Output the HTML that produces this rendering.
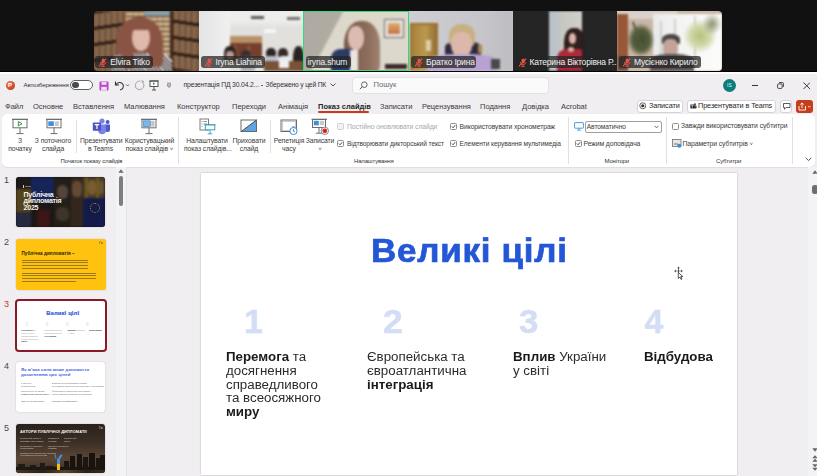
<!DOCTYPE html>
<html><head><meta charset="utf-8">
<style>
*{margin:0;padding:0;box-sizing:border-box}
html,body{width:817px;height:476px;overflow:hidden;background:#101010;font-family:"Liberation Sans",sans-serif}
.a{position:absolute}
.t{position:absolute;white-space:nowrap;line-height:1}
#zoom{left:0;top:0;width:817px;height:72px;background:#111}
.tile{position:absolute;top:11px;height:60px;overflow:hidden}
.bl{position:absolute;left:0;top:0;width:100%;height:100%;filter:blur(1px)}
.lbl{position:absolute;height:12px;background:rgba(36,36,36,.74);border-radius:3px;color:#f2f2f2;font-size:8.5px;letter-spacing:-0.18px;line-height:12.4px;padding:0 0 0 15px;white-space:nowrap;overflow:hidden}
.lbl.nm::before,.lbl.nm::after{display:none}

.lbl svg{position:absolute;left:3px;top:1.7px}
.mic{position:absolute;left:3px;top:2px;width:8px;height:8px}
#pp{left:0;top:72px;width:817px;height:404px;background:#f0eef1}
.tab{position:absolute;top:102.5px;font-size:7.5px;color:#3a3a3a;line-height:1;white-space:nowrap}
#ribbon{left:2px;top:114px;width:813px;height:53px;background:#fff;border-radius:5px;box-shadow:0 0.3px 1px rgba(0,0,0,.07)}
.rl{position:absolute;font-size:6.8px;letter-spacing:-0.08px;color:#3b3b3b;line-height:8.4px;text-align:center;white-space:nowrap}
.gl{position:absolute;top:158.4px;font-size:6px;letter-spacing:-0.16px;color:#333;line-height:1;white-space:nowrap}
.div{position:absolute;width:1px;background:#e1dfe3}
.cb{position:absolute;width:7px;height:7px;border:1px solid #8c8c8c;border-radius:1.5px;background:#fff}
.cb svg{position:absolute;left:0;top:0}
.cbl{position:absolute;font-size:6.8px;letter-spacing:-0.08px;color:#3b3b3b;line-height:1;white-space:nowrap}
.thumb{position:absolute;left:16px;width:90px;height:51px;border-radius:3px;overflow:hidden;box-shadow:0 0 1.5px rgba(0,0,0,.25)}
.num{position:absolute;left:4px;font-size:9px;color:#4a4a4a;line-height:1}
.sn{font-family:"Liberation Sans",sans-serif;font-weight:bold;font-size:33.5px;color:#d4ddf6;-webkit-text-stroke:0.5px #d4ddf6;transform-origin:0 0}
.st{position:absolute;white-space:nowrap;font-size:12px;line-height:13.65px;color:#2b2b2b;transform:scaleX(1.11);transform-origin:0 0}
.st b{color:#1a1a1a}
</style></head><body>
<div id="zoom" class="a"></div>

<!-- tiles -->
<div class="tile" style="left:94px;width:105px;border-radius:4px 0 0 4px;background:#6e5038">
 <div class="bl">
 <div class="a" style="left:-2px;top:0;width:34px;height:60px;background:repeating-linear-gradient(90deg,#8a5e40 0,#8a5e40 2px,#5a4234 2px,#5a4234 3px,#a07450 3px,#a07450 5px,#4e5a52 5px,#4e5a52 6px)"></div>
 <div class="a" style="left:-2px;top:0;width:34px;height:60px;background:repeating-linear-gradient(172deg,rgba(40,25,16,.95) 0,rgba(40,25,16,.95) 3px,rgba(0,0,0,0) 3px,rgba(0,0,0,0) 16px)"></div>
 <div class="a" style="left:32px;top:0;width:46px;height:45px;background:repeating-linear-gradient(90deg,#d8b080 0,#d8b080 2px,#a07858 2px,#a07858 3px,#e8c898 3px,#e8c898 5px,#7a8a88 5px,#7a8a88 6px)"></div>
 <div class="a" style="left:32px;top:0;width:46px;height:45px;background:repeating-linear-gradient(rgba(70,45,30,.9) 0,rgba(70,45,30,.9) 1.3px,rgba(0,0,0,0) 1.3px,rgba(0,0,0,0) 5px)"></div>
 <div class="a" style="left:50px;top:0;width:28px;height:5px;background:#8aa0a8"></div>
 <div class="a" style="left:32px;top:45px;width:46px;height:15px;background:linear-gradient(#c8a070,#b88858)"></div>
 <div class="a" style="left:78px;top:0;width:29px;height:60px;background:repeating-linear-gradient(90deg,#8a5e40 0,#8a5e40 2px,#5a4234 2px,#5a4234 3px,#a07450 3px,#a07450 5px,#4e5a52 5px,#4e5a52 6px)"></div>
 <div class="a" style="left:78px;top:0;width:29px;height:60px;background:repeating-linear-gradient(8deg,rgba(40,25,16,.95) 0,rgba(40,25,16,.95) 3px,rgba(0,0,0,0) 3px,rgba(0,0,0,0) 16px)"></div>
 <div class="a" style="left:76px;top:0;width:3px;height:60px;background:#3a2418"></div>
 <div class="a" style="left:22px;top:6px;width:47px;height:52px;border-radius:48% 48% 20% 20%;background:#8a5444"></div>
 <div class="a" style="left:38px;top:14px;width:18px;height:26px;border-radius:45% 45% 48% 48%;background:#dfbaaa"></div>
 <div class="a" style="left:36px;top:11px;width:22px;height:8px;border-radius:50% 50% 20% 20%;background:#8a5444"></div>
 <div class="a" style="left:18px;top:42px;width:60px;height:18px;border-radius:35% 35% 0 0;background:repeating-linear-gradient(45deg,#ebe8e8 0,#ebe8e8 1.6px,#3c3434 1.6px,#3c3434 3px)"></div>
 <div class="a" style="left:28px;top:38px;width:12px;height:20px;border-radius:30%;background:#8a5444"></div>
 <div class="a" style="left:55px;top:38px;width:14px;height:18px;border-radius:30%;background:#8a5444"></div>
 </div>
</div>
<div class="tile" style="left:199px;width:104px;background:#e2e0dc">
 <div class="bl">
 <div class="a" style="left:31px;top:0;width:73px;height:12px;background:#ededec"></div>
 <div class="a" style="left:31px;top:12px;width:73px;height:4px;background:#e6e5e3"></div>
 <div class="a" style="left:0;top:0;width:31px;height:60px;background:linear-gradient(90deg,#e4e4e6,#f0f0f0)"></div>
 <div class="a" style="left:52px;top:5px;width:13px;height:2.5px;background:#5a5a5a"></div>
 <div class="a" style="left:88px;top:6px;width:13px;height:2.5px;background:#707070"></div>
 <div class="a" style="left:65px;top:18px;width:12px;height:4px;background:#f6f6f6"></div>
 <div class="a" style="left:31px;top:25px;width:32px;height:7px;background:#b89068"></div>
 <div class="a" style="left:31px;top:32px;width:32px;height:15px;background:#74402c"></div>
 <div class="a" style="left:34px;top:35px;width:4px;height:10px;background:#8a5038"></div>
 <div class="a" style="left:48px;top:35px;width:4px;height:10px;background:#8a5038"></div>
 <div class="a" style="left:25px;top:35px;width:12px;height:16px;border-radius:45% 45% 30% 30%;background:#2a2020"></div>
 <div class="a" style="left:27px;top:40px;width:8px;height:9px;border-radius:40%;background:#b89890"></div>
 <div class="a" style="left:42px;top:39px;width:10px;height:10px;border-radius:45%;background:#3a3030"></div>
 <div class="a" style="left:42px;top:46px;width:14px;height:14px;border-radius:30% 30% 0 0;background:#a8a8b0"></div>
 <div class="a" style="left:67px;top:37px;width:10px;height:11px;border-radius:45%;background:#2a2424"></div>
 <div class="a" style="left:65px;top:45px;width:14px;height:15px;border-radius:30% 30% 0 0;background:#b8c0d0"></div>
 <div class="a" style="left:79px;top:37px;width:10px;height:12px;border-radius:45%;background:#332828"></div>
 <div class="a" style="left:79px;top:45px;width:14px;height:15px;border-radius:30% 30% 0 0;background:#e8e8ec"></div>
 <div class="a" style="left:94px;top:35px;width:11px;height:25px;border-radius:45% 45% 0 0;background:#2a2222"></div>
 <div class="a" style="left:65px;top:50px;width:39px;height:10px;background:#7a5238"></div>
 <div class="a" style="left:80px;top:49px;width:10px;height:8px;background:#f0f0f0"></div>
 </div>
</div>
<div class="tile" style="left:303px;width:106px;background:#ddd8cc;border:1.7px solid #28e07a">
 <div class="bl">
 <div class="a" style="left:-2px;top:-2px;width:50px;height:62px;background:linear-gradient(118deg,#aeaaa2 0%,#b0aca2 50%,rgba(221,216,204,0) 51%)"></div>
 <div class="a" style="left:80px;top:7px;width:20px;height:19px;border:1.3px solid #6a6a70;background:#e8e4dc"></div>
 <div class="a" style="left:84px;top:11px;width:12px;height:11px;background:linear-gradient(#d8b070,#c87048)"></div>
 <div class="a" style="left:40px;top:9px;width:36px;height:52px;border-radius:45% 45% 15% 15%;background:linear-gradient(90deg,#7a5a48,#8a6a58 60%,#a08272)"></div>
 <div class="a" style="left:44px;top:14px;width:16px;height:24px;border-radius:45% 45% 48% 48%;background:#dcbcb2"></div>
 <div class="a" style="left:27px;top:37px;width:22px;height:23px;border-radius:40% 10% 0 0;background:#2c3a66"></div>
 <div class="a" style="left:46px;top:38px;width:8px;height:22px;background:#eae4e0"></div>
 <div class="a" style="left:81px;top:52px;width:22px;height:5px;background:#3a2828"></div>
 </div>
</div>
<div class="tile" style="left:409px;width:104px;background:#cac9cd">
 <div class="bl">
 <div class="a" style="left:0;top:0;width:104px;height:60px;background:linear-gradient(90deg,#cfced2,#c6c5ca 70%,#bdbcc0)"></div>
 <div class="a" style="left:1px;top:12px;width:28px;height:48px;background:#9a7030"></div>
 <div class="a" style="left:3px;top:14px;width:23px;height:46px;background:linear-gradient(90deg,#a8823c,#bc9850 60%,#98743a)"></div>
 <div class="a" style="left:17px;top:29px;width:5px;height:11px;background:#f0e8d0;opacity:.7"></div>
 <div class="a" style="left:36px;top:30px;width:36px;height:16px;border-radius:40% 40% 10% 10%;background:#2c2a42"></div>
 <div class="a" style="left:69px;top:34px;width:4px;height:8px;background:#b08a40"></div>
 <div class="a" style="left:40px;top:13px;width:26px;height:24px;border-radius:48% 48% 30% 30%;background:#c8b080"></div>
 <div class="a" style="left:42px;top:21px;width:21px;height:25px;border-radius:45%;background:#dcb8aa"></div>
 <div class="a" style="left:18px;top:43px;width:70px;height:17px;border-radius:40% 40% 0 0;background:#b8a2d2"></div>
 <div class="a" style="left:82px;top:48px;width:9px;height:10px;background:#4a4848"></div>
 </div>
</div>
<div class="tile" style="left:513px;width:104px;background:#252525">
 <div class="bl">
 <div class="a" style="left:35.5px;top:0;width:33.5px;height:60px;background:linear-gradient(90deg,#b8c0c8 0,#c0c4c8 30%,#c8c8c0 40%,#d0d0c8)"></div>
 <div class="a" style="left:51px;top:17px;width:20px;height:30px;border-radius:45% 40% 10% 10%;background:#2e1e1e"></div>
 <div class="a" style="left:55.5px;top:22px;width:7.5px;height:11px;border-radius:45%;background:#dab4aa"></div>
 <div class="a" style="left:44px;top:38px;width:25px;height:22px;border-radius:40% 10% 0 0;background:#aa2a3a"></div>
 <div class="a" style="left:55px;top:36px;width:6px;height:5px;background:#d8b0a0;border-radius:40%"></div>
 </div>
</div>
<div class="tile" style="left:617px;width:105px;border-radius:0 4px 4px 0;background:#c8b6a6">
 <div class="bl">
 <div class="a" style="left:0;top:0;width:60px;height:8px;background:#dad2ca"></div>
 <div class="a" style="left:0;top:3px;width:11px;height:42px;background:#985838"></div>
 <div class="a" style="left:0;top:45px;width:11px;height:15px;background:#6a4a38"></div>
 <div class="a" style="left:36px;top:3px;width:69px;height:57px;background:linear-gradient(90deg,#e8eaea,#f4f4f2 40%,#fcfcfa)"></div>
 <div class="a" style="left:43px;top:10px;width:2px;height:40px;background:#d0d0cc"></div>
 <div class="a" style="left:57px;top:8px;width:2px;height:45px;background:#d0d0cc"></div>
 <div class="a" style="left:77px;top:5px;width:2px;height:48px;background:#d0d0cc"></div>
 <div class="a" style="left:10px;top:12px;width:28px;height:34px;border-radius:45%;background:radial-gradient(#3e4a30,#56603e 45%,rgba(200,182,166,0) 70%)"></div><div class="a" style="left:20px;top:10px;width:2px;height:30px;background:#5a5a3a;transform:rotate(-20deg)"></div>
 <div class="a" style="left:66px;top:8px;width:34px;height:34px;border-radius:45%;background:radial-gradient(#b8c080,#d0d8a8 40%,rgba(250,250,246,0) 70%)"></div><div class="a" style="left:85px;top:2px;width:20px;height:22px;border-radius:45%;background:radial-gradient(#8a9070,rgba(250,250,246,0) 70%)"></div>
 <div class="a" style="left:45px;top:23px;width:18px;height:10px;border-radius:50% 50% 10% 10%;background:#4a4646"></div>
 <div class="a" style="left:46px;top:28px;width:15px;height:18px;border-radius:40%;background:#c4a49a"></div>
 <div class="a" style="left:33px;top:43px;width:44px;height:17px;border-radius:40% 40% 0 0;background:#5a5252"></div>
 </div>
</div>
<!-- labels -->
<div class="lbl" style="left:95.3px;top:56.4px;width:57.8px"><svg width="9" height="9" viewBox="0 0 9 9"><rect x="3.6" y="0.6" width="3.2" height="4.8" rx="1.6" fill="#e8544a"/><path d="M2.3 4 Q2.3 6.6 5.2 6.6 Q7.6 6.6 7.9 4.3 M5 6.6 V8.2 M3.2 8.4 H6.8" fill="none" stroke="#e8544a" stroke-width="0.9"/><path d="M8.3 0.7 L0.9 8.3" stroke="#e8544a" stroke-width="1.1"/></svg>Elvira Titko</div>
<div class="lbl" style="left:200.5px;top:56.4px;width:64px"><svg width="9" height="9" viewBox="0 0 9 9"><rect x="3.6" y="0.6" width="3.2" height="4.8" rx="1.6" fill="#e8544a"/><path d="M2.3 4 Q2.3 6.6 5.2 6.6 Q7.6 6.6 7.9 4.3 M5 6.6 V8.2 M3.2 8.4 H6.8" fill="none" stroke="#e8544a" stroke-width="0.9"/><path d="M8.3 0.7 L0.9 8.3" stroke="#e8544a" stroke-width="1.1"/></svg>Iryna Liahina</div>
<div class="lbl nm" style="left:305.5px;top:56.4px;width:45px;padding-left:2px">iryna.shum</div>
<div class="lbl" style="left:411px;top:56.4px;width:65px"><svg width="9" height="9" viewBox="0 0 9 9"><rect x="3.6" y="0.6" width="3.2" height="4.8" rx="1.6" fill="#e8544a"/><path d="M2.3 4 Q2.3 6.6 5.2 6.6 Q7.6 6.6 7.9 4.3 M5 6.6 V8.2 M3.2 8.4 H6.8" fill="none" stroke="#e8544a" stroke-width="0.9"/><path d="M8.3 0.7 L0.9 8.3" stroke="#e8544a" stroke-width="1.1"/></svg>Братко Ірина</div>
<div class="lbl" style="left:514.5px;top:56.4px;width:102.5px;border-radius:3px 0 0 3px"><svg width="9" height="9" viewBox="0 0 9 9"><rect x="3.6" y="0.6" width="3.2" height="4.8" rx="1.6" fill="#e8544a"/><path d="M2.3 4 Q2.3 6.6 5.2 6.6 Q7.6 6.6 7.9 4.3 M5 6.6 V8.2 M3.2 8.4 H6.8" fill="none" stroke="#e8544a" stroke-width="0.9"/><path d="M8.3 0.7 L0.9 8.3" stroke="#e8544a" stroke-width="1.1"/></svg>Катерина Вікторівна Р...</div>
<div class="lbl" style="left:619px;top:56.4px;width:82px"><svg width="9" height="9" viewBox="0 0 9 9"><rect x="3.6" y="0.6" width="3.2" height="4.8" rx="1.6" fill="#e8544a"/><path d="M2.3 4 Q2.3 6.6 5.2 6.6 Q7.6 6.6 7.9 4.3 M5 6.6 V8.2 M3.2 8.4 H6.8" fill="none" stroke="#e8544a" stroke-width="0.9"/><path d="M8.3 0.7 L0.9 8.3" stroke="#e8544a" stroke-width="1.1"/></svg>Мусієнко Кирило</div>
<div id="pp" class="a"></div>
<div class="a" style="left:0;top:71px;width:817px;height:1px;background:#000"></div>
<div class="a" style="left:0;top:72px;width:817px;height:2px;background:#fdfdfd"></div>
<div id="ribbon" class="a"></div>

<!-- title bar -->
<div class="a" style="left:5.5px;top:80.5px;width:9px;height:9px;border-radius:50%;background:radial-gradient(circle at 35% 30%,#f47c55,#c43e1c 75%)"></div>
<div class="t" style="left:8px;top:82px;font-size:6px;color:#fff;font-weight:bold">P</div>
<div class="t" style="left:23.5px;top:82.2px;font-size:6.1px;color:#333;letter-spacing:-0.12px">Автозбереження</div>
<div class="a" style="left:70px;top:79.5px;width:23px;height:10.5px;border:1.1px solid #606060;border-radius:6px;background:#fff"></div>
<div class="a" style="left:72.3px;top:81.5px;width:6.5px;height:6.5px;border-radius:50%;background:#4a4a4a"></div>
<svg class="a" style="left:99px;top:80.5px" width="10" height="10" viewBox="0 0 10 10"><rect x="0.5" y="0.5" width="9" height="9" rx="1" fill="#b24bc4"/><rect x="2.5" y="1" width="5" height="2.8" fill="#f3dcf7"/><rect x="2.2" y="5.8" width="5.6" height="3.7" fill="#f3dcf7"/></svg>
<svg class="a" style="left:113px;top:79px" width="18" height="12" viewBox="0 0 18 12"><path d="M2.5 2.5 L2.5 6 L6 6 M2.8 5.7 C4.5 3 8.5 2.6 10 5.5 C11.3 8 9.5 10.6 7 11" fill="none" stroke="#333" stroke-width="1.1"/><path d="M13 5.5 L14.5 7 L16 5.5" fill="none" stroke="#444" stroke-width="0.8"/></svg>
<svg class="a" style="left:133.5px;top:79px" width="11" height="12" viewBox="0 0 11 12"><path d="M6 2.2 C2 1.8 0.8 6 1.5 8 C2.5 11 7.5 11.5 9.3 8.5 C10.5 6.5 9.8 4 8 2.8 M7.8 1 L8.2 3 L10 2.5" fill="none" stroke="#9a9a9a" stroke-width="0.9"/></svg>
<svg class="a" style="left:148.5px;top:79.5px" width="10" height="11" viewBox="0 0 10 11"><rect x="1" y="1" width="8" height="5.5" fill="#fff" stroke="#444" stroke-width="0.9"/><path d="M0.5 1 H9.5" stroke="#444" stroke-width="1"/><path d="M4 2.3 L6.2 3.7 L4 5.1Z" fill="#2e9a3a"/><path d="M5 6.5 V10 M3 10 H7" stroke="#444" stroke-width="0.9"/></svg>
<svg class="a" style="left:166px;top:82px" width="6" height="7" viewBox="0 0 6 7"><path d="M1 1.2 H5" stroke="#555" stroke-width="0.7"/><path d="M1 3 L3 5.5 L5 3Z" fill="none" stroke="#555" stroke-width="0.7"/></svg>
<div class="t" style="left:183.5px;top:81.5px;font-size:6.8px;color:#333;letter-spacing:-0.15px">презентація ПД 30.04.2...</div>
<div class="a" style="left:261.2px;top:84.8px;width:1.7px;height:1.7px;border-radius:50%;background:#555"></div>
<div class="t" style="left:265.5px;top:81.5px;font-size:6.7px;color:#333;letter-spacing:-0.15px">Збережено у цей ПК</div>
<svg class="a" style="left:330px;top:83px" width="6" height="4" viewBox="0 0 6 4"><path d="M0.5 0.5 L3 3 L5.5 0.5" fill="none" stroke="#444" stroke-width="0.9"/></svg>
<div class="a" style="left:352px;top:77px;width:197px;height:16.5px;background:#fbfafb;border:1px solid #e3e1e5;border-radius:4px"></div>
<svg class="a" style="left:359px;top:80.5px" width="9" height="9" viewBox="0 0 9 9"><circle cx="5.3" cy="3.7" r="2.8" fill="none" stroke="#555" stroke-width="0.9"/><path d="M3.3 5.7 L0.8 8.2" stroke="#555" stroke-width="1"/></svg>
<div class="t" style="left:373.5px;top:81px;font-size:7.6px;color:#6b6b6b">Пошук</div>
<div class="a" style="left:723px;top:78.5px;width:13px;height:13px;border-radius:50%;background:#0f7b7b"></div>
<div class="t" style="left:727px;top:82.5px;font-size:5px;color:#cfe">IS</div>
<div class="a" style="left:752px;top:85px;width:6px;height:1px;background:#333"></div>
<svg class="a" style="left:777px;top:81.5px" width="7" height="7" viewBox="0 0 7 7"><rect x="0.6" y="1.9" width="4.5" height="4.5" rx="0.8" fill="none" stroke="#333" stroke-width="0.9"/><path d="M2 0.6 H5.6 Q6.4 0.6 6.4 1.4 V5" fill="none" stroke="#333" stroke-width="0.9"/></svg>
<svg class="a" style="left:802.5px;top:81.5px" width="7.5" height="7.5" viewBox="0 0 7 7"><path d="M0.5 0.5 L6.5 6.5 M6.5 0.5 L0.5 6.5" stroke="#333" stroke-width="0.9"/></svg>
<!-- right buttons -->
<div class="a" style="left:637px;top:99.5px;width:46px;height:13px;background:#fff;border:1px solid #d6d4d8;border-radius:3px"></div>
<svg class="a" style="left:638.8px;top:102.3px" width="7.5" height="7.5" viewBox="0 0 8 8"><circle cx="4" cy="4" r="3.2" fill="none" stroke="#333" stroke-width="0.8"/><circle cx="4" cy="4" r="1.7" fill="#333"/></svg>
<div class="t" style="left:649px;top:102.2px;font-size:7.3px;color:#262626;letter-spacing:-0.1px">Записати</div>
<div class="a" style="left:686.5px;top:99.5px;width:89px;height:13px;background:#fff;border:1px solid #d6d4d8;border-radius:3px"></div>
<svg class="a" style="left:689.5px;top:102.5px" width="7" height="6.5" viewBox="0 0 9 8"><circle cx="6.3" cy="1.6" r="1.3" fill="#444"/><rect x="4.8" y="3" width="3.6" height="4" rx="1" fill="#444"/><rect x="0.5" y="1.8" width="5" height="5" fill="#222"/><path d="M1.7 3 H4.3 M3 3 V6" stroke="#fff" stroke-width="0.8"/></svg>
<div class="t" style="left:698px;top:102.2px;font-size:7.3px;color:#262626;letter-spacing:-0.1px">Презентувати в Teams</div>
<div class="a" style="left:780px;top:99.5px;width:11.5px;height:13px;background:#fff;border:1px solid #d6d4d8;border-radius:3px"></div>
<svg class="a" style="left:782.5px;top:102.5px" width="8" height="7" viewBox="0 0 8 7"><path d="M0.5 0.5 H7 V4.5 H3 L1.5 6.3 V4.5 H0.5Z" fill="none" stroke="#333" stroke-width="0.8"/></svg>
<div class="a" style="left:796px;top:99.5px;width:17px;height:13px;background:#c43e1c;border-radius:3px"></div>
<svg class="a" style="left:798px;top:101.5px" width="14" height="9" viewBox="0 0 14 9"><path d="M1 4 V8 H7.5 V4 M4 6 V1 M2.3 2.6 L4 0.9 L5.7 2.6" fill="none" stroke="#fff" stroke-width="0.9"/><path d="M10 4 L11.3 5.3 L12.6 4" fill="none" stroke="#fff" stroke-width="0.8"/></svg>



<!-- ribbon content -->
<svg class="a" style="left:11px;top:117.5px" width="18" height="17" viewBox="0 0 18 17"><path d="M1 1.3 H17" stroke="#6e6e6e" stroke-width="1.2"/><rect x="2" y="1.5" width="14" height="8.3" fill="#fff" stroke="#6e6e6e" stroke-width="1"/><path d="M7.3 3.5 L11 5.7 L7.3 7.9Z" fill="none" stroke="#2f9a46" stroke-width="1"/><path d="M9 9.8 V15.5 M5.5 15.6 H12.5" stroke="#6e6e6e" stroke-width="1"/></svg>
<svg class="a" style="left:44.5px;top:117.5px" width="18" height="17" viewBox="0 0 18 17"><path d="M1 1.3 H17" stroke="#6e6e6e" stroke-width="1.2"/><rect x="2" y="1.5" width="14" height="8.3" fill="#fff" stroke="#6e6e6e" stroke-width="1"/><rect x="3.3" y="3.3" width="5.5" height="4.7" fill="#3f8fdb"/><rect x="9.7" y="3.3" width="4.2" height="4.7" fill="#c9c9c9"/><path d="M9 9.8 V15.5 M5.5 15.6 H12.5" stroke="#6e6e6e" stroke-width="1"/></svg>
<div class="rl" style="left:0px;width:40px;top:136.5px">З<br>початку</div>
<div class="rl" style="left:33px;width:40px;top:136.5px">З поточного<br>слайда</div>
<div class="div" style="left:76px;top:120px;height:33px"></div>
<svg class="a" style="left:91.5px;top:117.5px" width="19" height="17" viewBox="0 0 19 17"><circle cx="10" cy="3" r="2.6" fill="#7b83eb"/><circle cx="15.6" cy="4" r="2" fill="#5059c9"/><path d="M12.5 6.5 H18 V11.5 Q18 14 15.5 14 Q13.5 14 12.5 12.5Z" fill="#5059c9"/><path d="M6 6.5 H14 V12 Q14 16.3 10 16.3 Q6.5 16.3 6 12.5Z" fill="#7b83eb"/><rect x="0.8" y="4.5" width="8.3" height="8.3" rx="0.8" fill="#4b53bc"/><path d="M2.7 6.6 H7.2 M4.95 6.6 V11" stroke="#fff" stroke-width="1.2"/></svg>
<div class="rl" style="left:80px;width:41px;top:136.5px">Презентувати<br>в Teams</div>
<svg class="a" style="left:139.5px;top:117.5px" width="18" height="17" viewBox="0 0 18 17"><path d="M1 1.3 H17" stroke="#6e6e6e" stroke-width="1.2"/><rect x="2" y="1.5" width="14" height="8.3" fill="#fff" stroke="#6e6e6e" stroke-width="1"/><rect x="3.4" y="2.8" width="7" height="5.8" fill="#7cb7ec" stroke="#3f7fc0" stroke-width="0.6"/><rect x="11.2" y="2.8" width="3.3" height="5.8" fill="#c4c4c4"/><path d="M9 9.8 V15.5 M5.5 15.6 H12.5" stroke="#6e6e6e" stroke-width="1"/></svg>
<div class="rl" style="left:123.5px;width:52px;top:136.5px">Користувацький<br>показ слайдів <span style="font-size:6px">˅</span></div>
<div class="gl" style="left:60.5px">Початок показу слайдів</div>
<div class="div" style="left:178px;top:117px;height:47px"></div>

<svg class="a" style="left:198.5px;top:117.5px" width="18" height="17" viewBox="0 0 18 17"><rect x="1" y="1" width="8.5" height="11" fill="#fff" stroke="#6e6e6e" stroke-width="0.9"/><path d="M2.5 3.5 H3.5 M4.5 3.5 H8 M2.5 6 H3.5 M4.5 6 H8 M2.5 8.5 H3.5" stroke="#777" stroke-width="0.8"/><path d="M5.5 6.8 H16.5" stroke="#2a9bb8" stroke-width="1"/><rect x="6.3" y="7" width="9.5" height="4.8" fill="#fff" stroke="#2a9bb8" stroke-width="0.9"/><path d="M11 11.8 V15.6 M8.8 15.8 H13.2" stroke="#2a9bb8" stroke-width="0.9"/></svg>
<div class="rl" style="left:184px;width:46px;top:136.5px">Налаштувати<br>показ слайдів...</div>
<svg class="a" style="left:240px;top:119px" width="18" height="14" viewBox="0 0 18 14"><path d="M16.5 1 V12.5 H1.5Z" fill="#5ea3e4"/><rect x="1" y="1" width="15.5" height="11.5" fill="none" stroke="#6a6a6a" stroke-width="1"/><path d="M1.5 12.3 L16.3 1.2" stroke="#333" stroke-width="0.9"/></svg>
<div class="rl" style="left:232px;width:34px;top:136.5px">Приховати<br>слайд</div>
<div class="div" style="left:270px;top:120px;height:33px"></div>
<svg class="a" style="left:280px;top:119px" width="20" height="16" viewBox="0 0 20 16"><rect x="1" y="1" width="15.5" height="11.5" fill="#fff" stroke="#6a6a6a" stroke-width="1"/><rect x="2.3" y="2.3" width="13" height="9" fill="#fff" stroke="#9a9a9a" stroke-width="0.5"/><circle cx="13.5" cy="12" r="3.6" fill="#fff" stroke="#3b8ad8" stroke-width="1"/><path d="M13.5 10.2 V12.2 L14.7 12.8 M12.5 7.6 H14.5" stroke="#3b8ad8" stroke-width="0.8"/></svg>
<div class="rl" style="left:272px;width:34px;top:136.5px">Репетиція<br>часу</div>
<svg class="a" style="left:311px;top:117.5px" width="19" height="17" viewBox="0 0 19 17"><path d="M0.5 1.3 H16" stroke="#6e6e6e" stroke-width="1.2"/><rect x="1.5" y="1.5" width="13" height="8" fill="#fff" stroke="#6e6e6e" stroke-width="1"/><rect x="2.8" y="2.8" width="5" height="4.5" fill="#3f8fdb"/><rect x="8.7" y="2.8" width="4.5" height="4.5" fill="#c9c9c9"/><path d="M8 9.5 V15 M4.8 15.2 H11.5" stroke="#6e6e6e" stroke-width="1"/><circle cx="13.8" cy="12.8" r="3.7" fill="#fff" stroke="#555" stroke-width="0.7"/><circle cx="13.8" cy="12.8" r="2.4" fill="#e02020"/></svg>
<div class="rl" style="left:304px;width:32px;top:136.5px">Записати<br><span style="font-size:6px">˅</span></div>

<div class="cb" style="left:337px;top:123px;border-color:#d0d0d0;background:#f2f2f2"></div>
<div class="cbl" style="left:347px;top:123.5px;color:#a8a8a8">Постійно оновлювати слайди</div>
<div class="cb k" style="left:337px;top:140px"><svg width="5" height="5" viewBox="0 0 6 6"><path d="M1.1 3.1 L2.5 4.5 L5 1.5" fill="none" stroke="#2a2a2a" stroke-width="1.05"/></svg></div>
<div class="cbl" style="left:347px;top:141px;font-size:6.6px">Відтворювати дикторський текст</div>
<div class="cb k" style="left:450px;top:123px"><svg width="5" height="5" viewBox="0 0 6 6"><path d="M1.1 3.1 L2.5 4.5 L5 1.5" fill="none" stroke="#2a2a2a" stroke-width="1.05"/></svg></div>
<div class="cbl" style="left:459.5px;top:123.5px">Використовувати хронометраж</div>
<div class="cb k" style="left:450px;top:140px"><svg width="5" height="5" viewBox="0 0 6 6"><path d="M1.1 3.1 L2.5 4.5 L5 1.5" fill="none" stroke="#2a2a2a" stroke-width="1.05"/></svg></div>
<div class="cbl" style="left:459.5px;top:141px;font-size:6.6px">Елементи керування мультимедіа</div>
<div class="gl" style="left:354px">Налаштування</div>
<div class="div" style="left:568px;top:117px;height:47px"></div>

<svg class="a" style="left:574px;top:122px" width="10" height="9" viewBox="0 0 10 9"><rect x="0.6" y="0.6" width="8.8" height="5.6" rx="0.5" fill="none" stroke="#3a90d8" stroke-width="0.9"/><path d="M5 6.2 V8 M3 8.2 H7" stroke="#3a90d8" stroke-width="0.8"/></svg>
<div class="a" style="left:584.5px;top:120.8px;width:77px;height:11.8px;border:1px solid #a0a0a0;border-radius:2px;background:#fff"></div>
<div class="cbl" style="left:586.8px;top:123.6px;font-size:6.6px">Автоматично</div>
<svg class="a" style="left:654px;top:125px" width="5" height="4" viewBox="0 0 5 4"><path d="M0.5 0.8 L2.5 2.8 L4.5 0.8" fill="none" stroke="#444" stroke-width="0.8"/></svg>
<div class="cb k" style="left:575px;top:140px"><svg width="5" height="5" viewBox="0 0 6 6"><path d="M1.1 3.1 L2.5 4.5 L5 1.5" fill="none" stroke="#2a2a2a" stroke-width="1.05"/></svg></div>
<div class="cbl" style="left:583.5px;top:141px">Режим доповідача</div>
<div class="gl" style="left:604.5px">Монітори</div>
<div class="div" style="left:665.5px;top:117px;height:47px"></div>

<div class="cb" style="left:672px;top:122.5px"></div>
<div class="cbl" style="left:681px;top:123.3px">Завжди використовувати субтитри</div>
<svg class="a" style="left:671.5px;top:138.5px" width="10" height="9" viewBox="0 0 10 9"><rect x="0.5" y="0.5" width="8.5" height="7" fill="#e6e6e6" stroke="#6e6e6e" stroke-width="0.8"/><path d="M2 5 H6" stroke="#555" stroke-width="0.8"/><circle cx="7.3" cy="6.8" r="2" fill="#3b8ad8"/></svg>
<div class="cbl" style="left:682.5px;top:141px">Параметри субтитрів <span style="font-size:6px">˅</span></div>
<div class="gl" style="left:716px">Субтитри</div>
<div class="div" style="left:792px;top:117px;height:47px"></div>
<svg class="a" style="left:804.5px;top:157px" width="7" height="5" viewBox="0 0 7 5"><path d="M0.7 0.8 L3.5 3.6 L6.3 0.8" fill="none" stroke="#444" stroke-width="0.9"/></svg>

<!-- tabs -->
<div class="tab" style="left:5px">Файл</div>
<div class="tab" style="left:33px">Основне</div>
<div class="tab" style="left:73px">Вставлення</div>
<div class="tab" style="left:124px">Малювання</div>
<div class="tab" style="left:177px">Конструктор</div>
<div class="tab" style="left:232px">Переходи</div>
<div class="tab" style="left:278px">Анімація</div>
<div class="tab" style="left:318px;font-weight:bold;color:#262626">Показ слайдів</div>
<div class="a" style="left:318px;top:111px;width:51px;height:2px;background:#c43e1c;border-radius:1px"></div>
<div class="tab" style="left:380px">Записати</div>
<div class="tab" style="left:422px">Рецензування</div>
<div class="tab" style="left:480px">Подання</div>
<div class="tab" style="left:522px">Довідка</div>
<div class="tab" style="left:561px">Acrobat</div>

<!-- left pane -->
<div class="a" style="left:115.5px;top:167px;width:10.5px;height:309px;background:#f3f2f4"></div>
<div class="a" style="left:126px;top:167px;width:1px;height:309px;background:#e6e4e8"></div>
<svg class="a" style="left:117.5px;top:169px" width="6" height="4" viewBox="0 0 6 4"><path d="M0.3 3.7 L3 0.3 L5.7 3.7Z" fill="#6a6a6a"/></svg>
<div class="a" style="left:118.5px;top:175.5px;width:4.6px;height:30.5px;border-radius:2.3px;background:#7d7d7d"></div>

<div class="num" style="top:176px;color:#444">1</div>
<div class="thumb" style="top:177.3px;width:89px;height:50px;background:#141420">
 <div class="bl" style="filter:blur(0.8px)">
 <div class="a" style="left:0;top:0;width:15px;height:12px;background:#1c1a18"></div>
 <div class="a" style="left:0;top:12px;width:15px;height:23px;background:#55441a"></div>
 <div class="a" style="left:0;top:35px;width:20px;height:15px;background:#262a40"></div>
 <div class="a" style="left:15px;top:0;width:23px;height:24px;background:#16245a"></div>
 <div class="a" style="left:15px;top:24px;width:23px;height:26px;background:#1c1616"></div>
 <div class="a" style="left:21px;top:33px;width:13px;height:17px;background:#3c1616"></div>
 <div class="a" style="left:38px;top:0;width:17px;height:50px;background:#221e18"></div>
 <div class="a" style="left:41px;top:8px;width:11px;height:14px;border-radius:45%;background:#54443a"></div>
 <div class="a" style="left:40px;top:30px;width:13px;height:14px;border-radius:40%;background:#3e3428"></div>
 <div class="a" style="left:55px;top:0;width:12px;height:50px;background:#33271e"></div>
 <div class="a" style="left:56px;top:4px;width:10px;height:16px;border-radius:40%;background:#644a34"></div>
 <div class="a" style="left:67px;top:0;width:22px;height:21px;background:#4a3c28"></div>
 <div class="a" style="left:69px;top:0;width:3px;height:21px;background:#6e5a1c"></div>
 <div class="a" style="left:80px;top:0;width:3px;height:21px;background:#6e5a1c"></div>
 <div class="a" style="left:72px;top:3px;width:8px;height:15px;border-radius:40%;background:#7a5c34"></div><div class="a" style="left:82px;top:4px;width:6px;height:13px;border-radius:40%;background:#6a5434"></div>
 <div class="a" style="left:67px;top:21px;width:22px;height:29px;background:#141a4a"></div>
 </div>
 <div class="a" style="left:73.5px;top:25.5px;width:10px;height:10px;border-radius:50%;border:1.2px dotted #c0a020;opacity:.9"></div>
 <div class="a" style="left:7px;top:7.5px;width:1px;height:3px;background:#ccc"></div>
 <div class="a" style="left:9px;top:9px;width:6px;height:1px;background:#777"></div>
 <div class="t" style="left:7.5px;top:14.5px;font-size:7px;line-height:6.5px;font-weight:bold;color:#f4f2ec;letter-spacing:-0.2px">Публічна<br>дипломатія<br>2025</div>
</div>

<div class="num" style="top:238px">2</div>
<div class="thumb" style="top:238.7px;width:90px;height:51px;background:#fec20f">
 <div class="t" style="left:5.5px;top:13px;font-size:4.6px;font-weight:bold;color:#2a2208;letter-spacing:0.05px">Публічна дипломатія –</div>
 <div class="a" style="left:6px;top:19.8px;width:66px;height:10.8px;background:repeating-linear-gradient(#fec20f 0,#fec20f 1.5px,#9c7a14 1.5px,#9c7a14 2.7px)"></div>
 <div class="a" style="left:6px;top:32.5px;width:74px;height:10.8px;background:repeating-linear-gradient(#fec20f 0,#fec20f 1.5px,#9c7a14 1.5px,#9c7a14 2.7px)"></div>
 <div class="a" style="left:60px;top:41px;width:20px;height:3px;background:#fec20f"></div>
 <div class="a" style="left:72px;top:22.5px;width:8px;height:3px;background:#fec20f"></div>
 <div class="t" style="left:83px;top:3px;font-size:3.5px;color:#444">Ги</div>
</div>

<div class="num" style="top:299.5px;color:#c43e1c">3</div>
<div class="thumb" style="top:298.8px;left:14.8px;width:92.4px;height:53.7px;background:#fff;border:2px solid #8a1a2a;border-radius:4px;box-shadow:none">
 <div class="t" style="left:29.5px;top:10.5px;font-size:5.8px;font-weight:bold;color:#2f5bd8;letter-spacing:0.15px;-webkit-text-stroke:0.2px #2f5bd8">Великі цілі</div>
 <div class="t" style="left:8.5px;top:21.5px;font-size:5.5px;font-weight:bold;color:#dfe5f8;word-spacing:15.5px">1 2 3 4</div>
 <div class="t" style="left:4.5px;top:29.5px;font-size:2.4px;line-height:2.8px;color:#999"><b style="color:#444">Перемога</b> та<br>досягнення<br>справедливого<br>та всеосяжного<br><b style="color:#444">миру</b></div>
 <div class="t" style="left:27.5px;top:29.5px;font-size:2.4px;line-height:2.8px;color:#999">Європейська та<br>євроатлантична<br><b style="color:#444">інтеграція</b></div>
 <div class="t" style="left:51px;top:29.5px;font-size:2.4px;line-height:2.8px;color:#999"><b style="color:#444">Вплив</b> України<br>у світі</div>
 <div class="t" style="left:72.5px;top:29.5px;font-size:2.4px;line-height:2.8px;color:#444"><b>Відбудова</b></div>
</div>

<div class="num" style="top:361.5px">4</div>
<div class="thumb" style="top:362.3px;width:89px;height:50px;background:#fff">
 <div class="t" style="left:5px;top:5px;font-size:4.3px;line-height:5px;color:#3a5fe0;font-weight:bold;letter-spacing:0.1px">Як м’яка сила може допомогти<br>досягненню цих цілей</div>
 <div class="t" style="left:5px;top:19.5px;font-size:2.3px;line-height:2.7px;color:#666">Культура і<br>інноваційність</div>
 <div class="t" style="left:36px;top:19.5px;font-size:2.3px;line-height:2.7px;color:#666">Забезпечення підтримки України<br>та розвиток партнерських відносин з державами</div>
 <div class="t" style="left:5px;top:27.5px;font-size:2.3px;line-height:2.7px;color:#666">Збереження та захист<br><b>української ідентичності</b></div>
 <div class="t" style="left:36px;top:27.5px;font-size:2.3px;line-height:2.7px;color:#666">Формування обізнаності про Україну<br>серед широкої аудиторії за кордоном</div>
 <div class="t" style="left:5px;top:37.5px;font-size:2.3px;line-height:2.7px;color:#555">Залучення інвесторів</div>
 <div class="t" style="left:36px;top:37.5px;font-size:2.3px;line-height:2.7px;color:#555">Протидія дезінформації</div>
</div>

<div class="num" style="top:423.5px">5</div>
<div class="thumb" style="top:424.1px;width:89px;height:49.4px;background:linear-gradient(#2a211b 0%,#3a2e25 35%,#5a4636 70%,#4a3a2e 85%,#2a2119 100%)">
 <div class="t" style="left:4px;top:5.5px;font-size:3.9px;font-weight:bold;color:#fbf8f4;letter-spacing:0.1px">АКТОРИ ПУБЛІЧНОЇ ДИПЛОМАТІЇ</div>
 <div class="t" style="left:83px;top:3px;font-size:3.5px;color:#ddd">Ги</div>
 <div class="t" style="left:4px;top:13px;font-size:2.2px;line-height:2.4px;color:#d8d0c8">Український народ в<br>підтримку нашої країни</div>
 <div class="t" style="left:32px;top:13px;font-size:2.2px;line-height:2.4px;color:#d8d0c8">Громадські<br>ініціатив</div>
 <div class="t" style="left:48px;top:13px;font-size:2.2px;line-height:2.4px;color:#d8d0c8">Український<br>бізнес</div>
 <div class="t" style="left:4px;top:20.5px;font-size:2.2px;line-height:2.4px;color:#d8d0c8">Центральні установи і<br>органи влади</div>
 <div class="t" style="left:32px;top:20.5px;font-size:2.2px;line-height:2.4px;color:#d8d0c8">Місцеві осередки та<br>громади</div>
 <div class="t" style="left:4px;top:27.5px;font-size:2.2px;line-height:2.4px;color:#d8d0c8">Політичні та культурні діячі України<br>та громадяни за кордоном</div>
 <div class="bl" style="filter:blur(0.5px)">
 <div class="a" style="left:0;top:43px;width:89px;height:7px;background:#1c1612"></div>
 <div class="a" style="left:2px;top:40px;width:7px;height:10px;background:#201a16"></div>
 <div class="a" style="left:14px;top:41px;width:6px;height:9px;background:#1e1814"></div>
 <div class="a" style="left:24px;top:39px;width:5px;height:11px;background:#201a16"></div>
 <div class="a" style="left:30px;top:42px;width:8px;height:8px;background:#1e1814"></div>
 <div class="a" style="left:48px;top:37px;width:5px;height:13px;background:#1c1612"></div>
 <div class="a" style="left:54px;top:32px;width:5px;height:18px;background:#18130f"></div>
 <div class="a" style="left:61px;top:30px;width:5px;height:20px;background:#18130f"></div>
 <div class="a" style="left:67px;top:33px;width:5px;height:17px;background:#1c1612"></div>
 <div class="a" style="left:73px;top:29px;width:6px;height:21px;background:#18130f"></div>
 <div class="a" style="left:80px;top:34px;width:4px;height:16px;background:#1c1612"></div>
 <div class="a" style="left:84px;top:31px;width:5px;height:19px;background:#18130f"></div>
 <div class="a" style="left:0;top:46px;width:89px;height:3.4px;background:linear-gradient(90deg,#4a3820,#2a2018 30%,#5a4628 55%,#2a2018 80%,#3a2c1c)"></div>
 </div>
 <div class="a" style="left:40.5px;top:35px;width:3px;height:5px;background:#4a90e0"></div>
 <div class="a" style="left:40.5px;top:40px;width:3px;height:6px;background:#e8c020"></div>
 <div class="a" style="left:42px;top:32px;width:4.5px;height:2.2px;background:#4a90e0;transform:rotate(-55deg)"></div>
 <div class="a" style="left:38.5px;top:30px;width:1px;height:5px;background:#4a90e0;transform:rotate(-15deg)"></div>
</div>

<!-- right scrollbar -->
<div class="a" style="left:808px;top:167px;width:9px;height:309px;background:#f3f2f4"></div>
<svg class="a" style="left:811.5px;top:169.5px" width="6" height="4" viewBox="0 0 6 4"><path d="M0.3 3.7 L3 0.3 L5.7 3.7Z" fill="#666"/></svg>
<div class="a" style="left:812px;top:185px;width:6px;height:9px;border-radius:2.5px;background:#6e6e6e"></div>
<svg class="a" style="left:811.5px;top:448px" width="6" height="4" viewBox="0 0 6 4"><path d="M0.3 0.3 L3 3.7 L5.7 0.3Z" fill="#666"/></svg>
<svg class="a" style="left:811.5px;top:455px" width="6" height="7" viewBox="0 0 6 7"><path d="M0.3 3.3 L3 0.2 L5.7 3.3Z M0.3 6.8 L3 3.7 L5.7 6.8Z" fill="#666"/></svg>
<svg class="a" style="left:811.5px;top:464px" width="6" height="7" viewBox="0 0 6 7"><path d="M0.3 0.2 L3 3.3 L5.7 0.2Z M0.3 3.7 L3 6.8 L5.7 3.7Z" fill="#666"/></svg>
<!-- slide -->
<div class="a" style="left:201px;top:173px;width:536px;height:302px;background:#fff;box-shadow:0 0 1.5px rgba(0,0,0,.3)"></div>


<!-- slide content -->
<div class="t" style="left:371px;top:233.5px;font-family:'Liberation Sans',sans-serif;font-weight:bold;font-size:33px;letter-spacing:0.7px;color:#2457d6;-webkit-text-stroke:0.7px #2457d6;transform:scaleX(1.06);transform-origin:0 0">Великі цілі</div>
<div class="t sn" style="left:244px;top:305px">1</div><div class="a" style="left:247.5px;top:329.5px;width:11px;height:3.5px;background:#d4ddf6"></div>
<div class="t sn" style="left:382.5px;top:305px;transform:scaleX(1.06)">2</div>
<div class="t sn" style="left:519px;top:305px;transform:scaleX(1.04)">3</div>
<div class="t sn" style="left:644.5px;top:305px">4</div>
<div class="st" style="left:225.5px;top:351.2px"><b>Перемога</b> та<br>досягнення<br>справедливого<br>та всеосяжного<br><b>миру</b></div>
<div class="st" style="left:366.5px;top:351.2px">Європейська та<br>євроатлантична<br><b>інтеграція</b></div>
<div class="st" style="left:512.5px;top:351.2px"><b>Вплив</b> України<br>у світі</div>
<div class="st" style="left:644px;top:351.2px"><b>Відбудова</b></div>
<svg class="a" style="left:673px;top:266px" width="12" height="14" viewBox="0 0 12 14"><path d="M5.5 0.5 L7 2.5 H6 V4.5 H8 V3.5 L10 5 L8 6.5 V5.5 H6 V7 H5 V5.5 H3 V6.5 L1 5 L3 3.5 V4.5 H5 V2.5 H4Z" fill="#111" stroke="#fff" stroke-width="0.5"/><path d="M5.3 6.5 L5.3 12.5 L6.8 11 L8.2 13.5 L9 13 L7.8 10.5 L9.8 10.5Z" fill="#fff" stroke="#111" stroke-width="0.7"/></svg>
</body></html>
